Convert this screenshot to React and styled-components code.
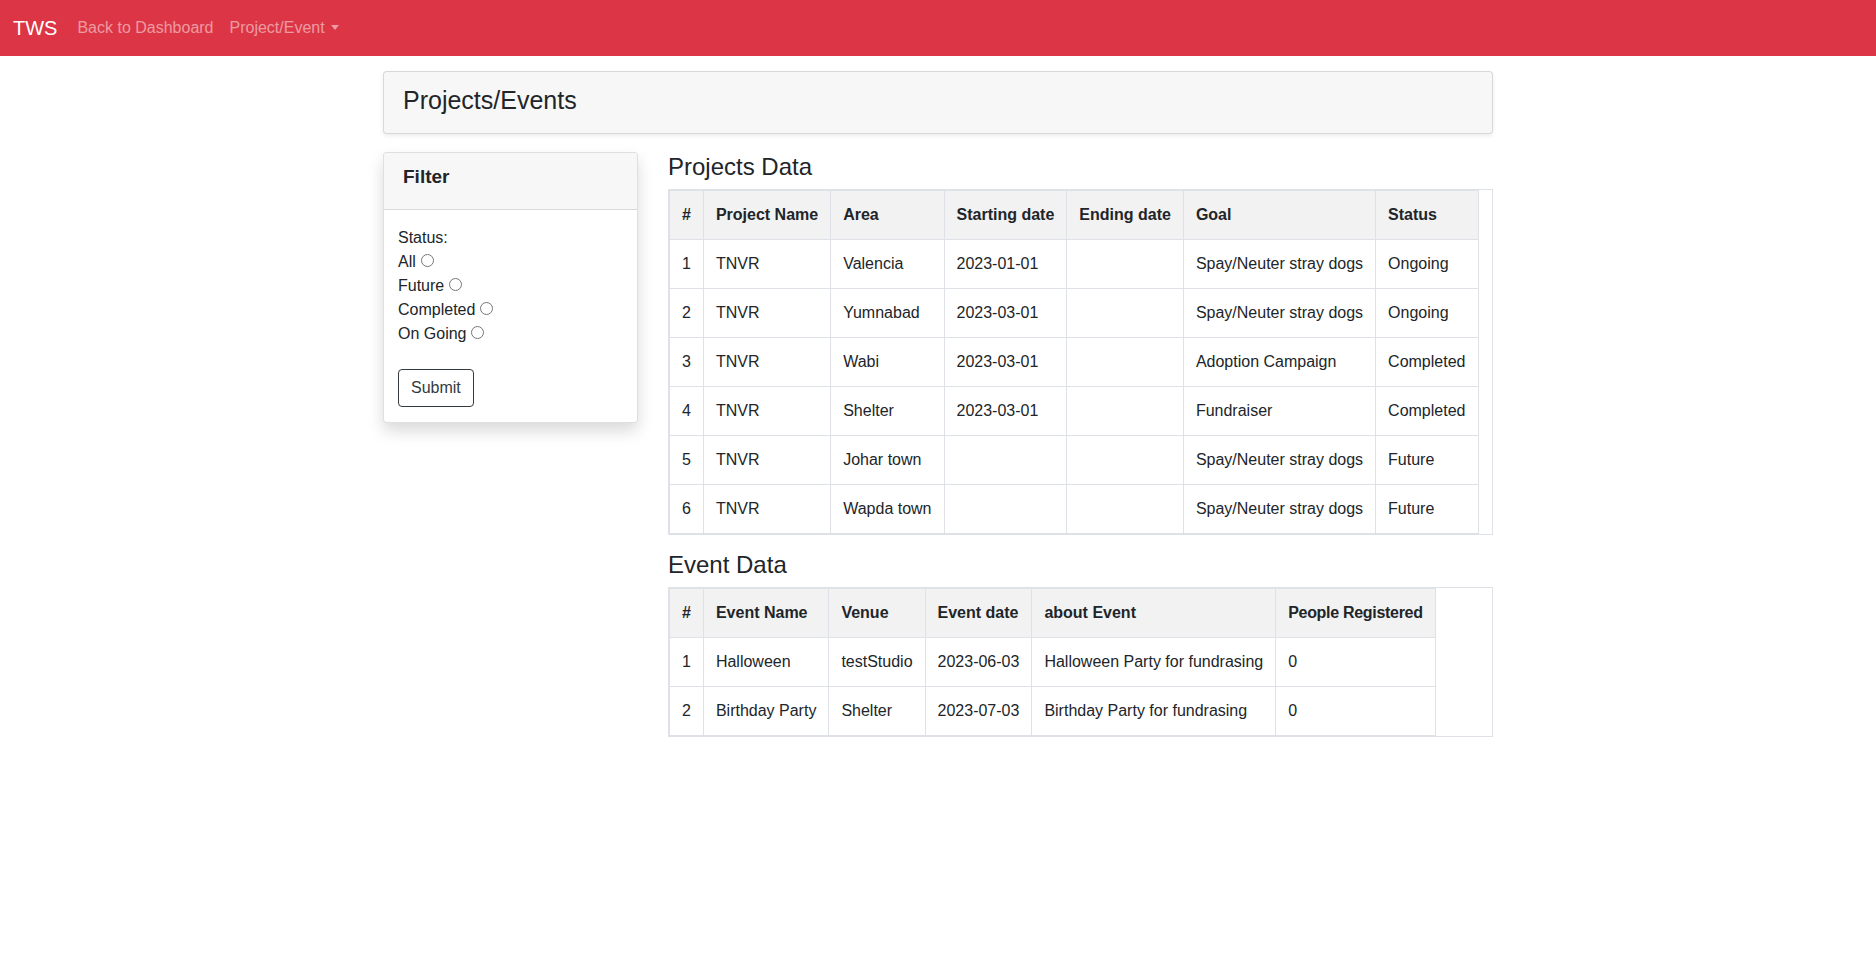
import React from "react";
import styled, { createGlobalStyle } from "styled-components";

const GlobalStyle = createGlobalStyle`
  *, *::before, *::after { box-sizing: border-box; }
  html, body { margin: 0; padding: 0; background: #fff; }
  body {
    font-family: "Liberation Sans", Arial, sans-serif;
    font-size: 16px;
    line-height: 1.5;
    color: #212529;
  }
`;

const Navbar = styled.nav`
  height: 56px;
  background: #dc3545;
  display: flex;
  align-items: center;
  padding: 0 16px 0 13px;
`;

const Brand = styled.a`
  color: #fff;
  font-size: 20px;
  line-height: 30px;
  margin-right: 12px;
  text-decoration: none;
`;

const NavLink = styled.a`
  color: rgba(255, 255, 255, 0.5);
  padding: 0 8px;
  line-height: 24px;
  text-decoration: none;
  display: inline-flex;
  align-items: center;
`;

const Caret = styled.span`
  display: inline-block;
  margin-left: 6px;
  margin-top: -2px;
  border-top: 5px solid rgba(255, 255, 255, 0.5);
  border-left: 4.5px solid transparent;
  border-right: 4.5px solid transparent;
`;

const Container = styled.main`
  width: 1110px;
  margin: 15px auto 0;
`;

const PageHeader = styled.div`
  background: #f7f7f7;
  border: 1px solid rgba(0, 0, 0, 0.125);
  border-radius: 4px;
  box-shadow: 0 2px 4px rgba(0, 0, 0, 0.075);
  padding: 12px 19px 9px;
`;

const PageTitle = styled.h3`
  margin: 0 0 8px;
  font-size: 25px;
  font-weight: 400;
  line-height: 32px;
`;

const Row = styled.div`
  display: flex;
  gap: 30px;
  margin-top: 18px;
  align-items: flex-start;
`;

const Sidebar = styled.aside`
  flex: 0 0 255px;
`;

const FilterCard = styled.div`
  border: 1px solid rgba(0, 0, 0, 0.125);
  border-radius: 4px;
  background: #fff;
  box-shadow: 0 8px 16px rgba(0, 0, 0, 0.15);
  overflow: hidden;
`;

const CardHeader = styled.div`
  background: #f7f7f7;
  border-bottom: 1px solid rgba(0, 0, 0, 0.125);
  padding: 12px 19px;
`;

const CardTitle = styled.h5`
  margin: 0 0 8px;
  font-size: 19px;
  font-weight: 700;
  line-height: 24px;
`;

const CardBody = styled.form`
  padding: 16px 14px 15px;
`;

const Line = styled.div`
  line-height: 24px;
`;

const Radio = styled.input.attrs({ type: "radio" })`
  margin: 3px 3px 0 5px;
  width: 13px;
  height: 13px;
`;

const SubmitButton = styled.button`
  margin-top: 23px;
  display: inline-block;
  font-family: inherit;
  font-size: 16px;
  line-height: 24px;
  padding: 6px 12px;
  color: #343a40;
  background: transparent;
  border: 1px solid #343a40;
  border-radius: 4px;
`;

const MainCol = styled.section`
  flex: 0 0 825px;
`;

const SectionTitle = styled.h4`
  margin: 1px 0 7px;
  font-size: 24px;
  font-weight: 400;
  line-height: 1.2;
`;

const TableWrap = styled.div`
  border: 1px solid #dee2e6;
  margin-bottom: 16px;
`;

const Table = styled.table`
  border-collapse: collapse;
  border: 1px solid #dee2e6;
`;

const Th = styled.th`
  width: ${(p) => p.$w}px;
  background: #f2f2f2;
  font-weight: 700;
  text-align: left;
  padding: 12px;
  border: 1px solid #dee2e6;
  white-space: nowrap;
  vertical-align: bottom;
  letter-spacing: ${(p) => (p.$tight ? "-0.3px" : "normal")};
`;

const Td = styled.td`
  padding: 12px;
  border: 1px solid #dee2e6;
  white-space: nowrap;
  vertical-align: top;
  height: 49px;
`;

const projectCols = [
  ["#", 32],
  ["Project Name", 127],
  ["Area", 113],
  ["Starting date", 122],
  ["Ending date", 113],
  ["Goal", 189],
  ["Status", 103],
];

const projects = [
  ["1", "TNVR", "Valencia", "2023-01-01", "", "Spay/Neuter stray dogs", "Ongoing"],
  ["2", "TNVR", "Yumnabad", "2023-03-01", "", "Spay/Neuter stray dogs", "Ongoing"],
  ["3", "TNVR", "Wabi", "2023-03-01", "", "Adoption Campaign", "Completed"],
  ["4", "TNVR", "Shelter", "2023-03-01", "", "Fundraiser", "Completed"],
  ["5", "TNVR", "Johar town", "", "", "Spay/Neuter stray dogs", "Future"],
  ["6", "TNVR", "Wapda town", "", "", "Spay/Neuter stray dogs", "Future"],
];

const eventCols = [
  ["#", 32],
  ["Event Name", 121],
  ["Venue", 94],
  ["Event date", 105],
  ["about Event", 241],
  ["People Registered", 158, true],
];

const events = [
  ["1", "Halloween", "testStudio", "2023-06-03", "Halloween Party for fundrasing", "0"],
  ["2", "Birthday Party", "Shelter", "2023-07-03", "Birthday Party for fundrasing", "0"],
];

function DataTable({ cols, rows }) {
  return (
    <TableWrap>
      <Table>
        <thead>
          <tr>
            {cols.map(([label, w, tight]) => (
              <Th key={label} $w={w} $tight={tight}>
                {label}
              </Th>
            ))}
          </tr>
        </thead>
        <tbody>
          {rows.map((r) => (
            <tr key={r[0]}>
              {r.map((c, i) => (
                <Td key={i}>{c}</Td>
              ))}
            </tr>
          ))}
        </tbody>
      </Table>
    </TableWrap>
  );
}

export default function App() {
  return (
    <>
      <GlobalStyle />
      <Navbar>
        <Brand href="#">TWS</Brand>
        <NavLink href="#">Back to Dashboard</NavLink>
        <NavLink href="#">
          Project/Event
          <Caret />
        </NavLink>
      </Navbar>
      <Container>
        <PageHeader>
          <PageTitle>Projects/Events</PageTitle>
        </PageHeader>
        <Row>
          <Sidebar>
            <FilterCard>
              <CardHeader>
                <CardTitle>Filter</CardTitle>
              </CardHeader>
              <CardBody onSubmit={(e) => e.preventDefault()}>
                <Line>Status:</Line>
                <Line>
                  All<Radio name="status" value="all" />
                </Line>
                <Line>
                  Future<Radio name="status" value="future" />
                </Line>
                <Line>
                  Completed<Radio name="status" value="completed" />
                </Line>
                <Line>
                  On Going<Radio name="status" value="ongoing" />
                </Line>
                <SubmitButton type="submit">Submit</SubmitButton>
              </CardBody>
            </FilterCard>
          </Sidebar>
          <MainCol>
            <SectionTitle>Projects Data</SectionTitle>
            <DataTable cols={projectCols} rows={projects} />
            <SectionTitle>Event Data</SectionTitle>
            <DataTable cols={eventCols} rows={events} />
          </MainCol>
        </Row>
      </Container>
    </>
  );
}
